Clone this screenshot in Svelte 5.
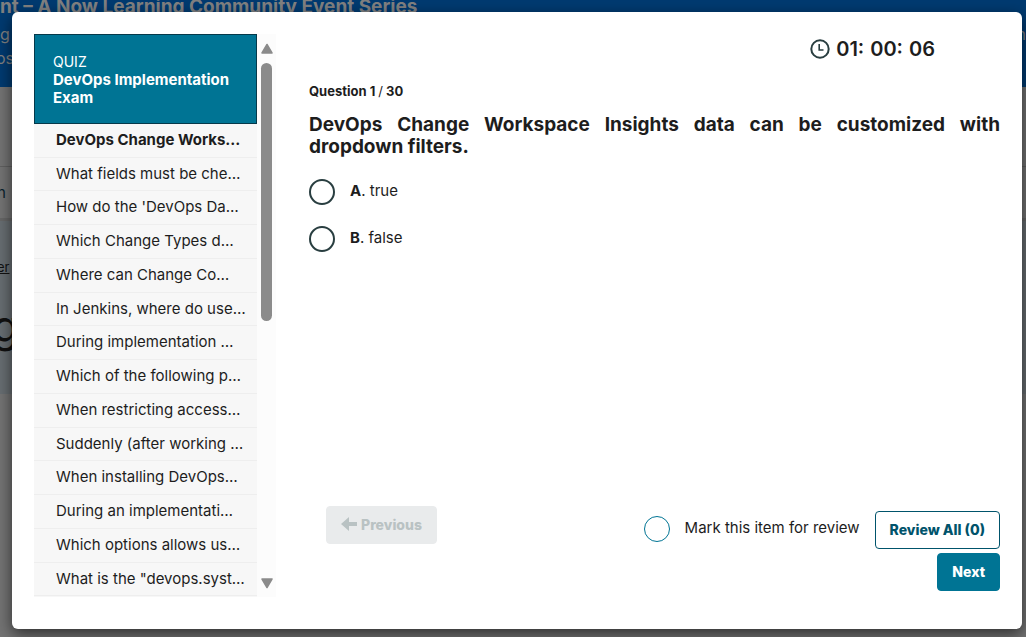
<script>
  const questions = [
    'DevOps Change Works…',
    'What fields must be che…',
    "How do the 'DevOps Da…",
    'Which Change Types d…',
    'Where can Change Co…',
    'In Jenkins, where do use…',
    'During implementation …',
    'Which of the following p…',
    'When restricting access…',
    'Suddenly (after working …',
    'When installing DevOps…',
    'During an implementati…',
    'Which options allows us…',
    'What is the "devops.syst…'
  ];
  const options = [
    { key: 'A', text: 'true' },
    { key: 'B', text: 'false' }
  ];
  let answer = $state('');
  let marked = $state(false);
  let current = $state(0);
</script>

<div class="page">
  <div class="backdrop" aria-hidden="true">
    <div class="banner">
      <div class="event">nt – A Now Learning Community Event Series</div>
      <div class="line"><span>g</span><span>n</span></div>
      <div class="line os">os</div>
    </div>
    <div class="strip"></div>
    <div class="tab">n</div>
    <div class="panel">
      <span class="crumb">er</span>
      <span class="big">g</span>
    </div>
  </div>

  <div class="modal" role="dialog" aria-label="Quiz">
    <aside>
      <div class="outline">
        <header>
          <span>QUIZ</span>
          <h1>DevOps Implementation Exam</h1>
        </header>
        <ul>
          {#each questions as q, i}
            <li><button class:active={i === current} onclick={() => (current = i)}>{q}</button></li>
          {/each}
        </ul>
      </div>
      <div class="scroll" aria-hidden="true">
        <svg width="14" height="12" viewBox="0 0 14 12"><path d="M7 1.5 12 10H2Z" fill="#8b8b8b" stroke="#8b8b8b" stroke-width="1.5" stroke-linejoin="round" /></svg>
        <div class="track"><div class="thumb"></div></div>
        <svg width="14" height="12" viewBox="0 0 14 12"><path d="M7 10.5 12 2H2Z" fill="#8b8b8b" stroke="#8b8b8b" stroke-width="1.5" stroke-linejoin="round" /></svg>
      </div>
    </aside>

    <main>
      <div class="timer">
        <svg width="20" height="20" viewBox="0 0 20 20" fill="none" stroke="#293e40"><circle cx="10" cy="10" r="8.7" stroke-width="2" /><path d="M9.2 5v6h4.3" stroke-width="1.6" /></svg>
        <span>01:</span><span>00:</span><span>06</span>
      </div>
      <p class="count">Question 1 <i>/</i> 30</p>
      <h2>DevOps Change Workspace Insights data can be customized with dropdown filters.</h2>
      <div class="options">
        {#each options as o}
          <label><input type="radio" name="answer" value={o.key} bind:group={answer} /><span><b>{o.key}</b>. {o.text}</span></label>
        {/each}
      </div>
      <footer>
        <button class="btn previous" disabled>
          <svg width="16" height="14" viewBox="0 0 16 14"><path d="M0 7 8 0v5h8v4H8v5Z" fill="currentColor" /></svg>
          Previous
        </button>
        <div class="actions">
          <label><input type="checkbox" bind:checked={marked} /><span>Mark this item for review</span></label>
          <button class="btn review">Review All ({marked ? 1 : 0})</button>
          <button class="btn next">Next</button>
        </div>
      </footer>
    </main>
  </div>
</div>

<style>
  :global(body) { margin: 0; background: #666; }
  * { box-sizing: border-box; }
  .page { display: grid; min-height: 100vh; font-family: Inter, "Liberation Sans", sans-serif; color: #1d1d1d; font-size: 15px; overflow: hidden; }
  .backdrop { grid-area: 1 / 1; background: #737373; color: #808080; }
  .banner { height: 87px; background: #003a70; }
  .event { height: 24px; font-size: 19px; line-height: 14px; font-weight: 700; white-space: nowrap; }
  .line { display: flex; justify-content: space-between; height: 24px; font-size: 16px; line-height: 20px; }
  .os { margin-left: -4px; }
  .strip { height: 80px; border-bottom: 1px solid #606060; }
  .tab { height: 54px; padding-top: 16px; color: #08222c; border-bottom: 3px solid #666; margin-left: -3px; }
  .panel { height: 173px; padding-top: 38px; background: #676d71; color: #111; display: flex; flex-direction: column; gap: 26px; }
  .crumb { margin-left: -3px; font-size: 13px; text-decoration: underline; }
  .big { font-size: 44px; line-height: 50px; margin-left: -8px; font-weight: 400; }
  .modal { grid-area: 1 / 1; z-index: 1; margin: 12px 4px 8px 12px; padding: 22px 22px 32px; background: #fff; border-radius: 6px; box-shadow: 0 5px 15px rgba(0, 0, 0, 0.6); display: flex; gap: 33px; }
  aside { display: flex; flex: none; }
  .outline { width: 223px; background: #f7f7f7; }
  header { height: 90px; padding: 18px; background: #007494; border: 1px solid #06394a; color: #fff; line-height: 18px; font-size: 14px; }
  h1 { margin: 0; font-size: 15px; line-height: 18px; font-weight: 700; }
  ul { list-style: none; margin: 0; padding: 0; }
  li { border-bottom: 1px solid #eee; }
  li button { display: block; width: 100%; height: 33px; padding: 0 12px 2px 22px; border: 0; background: none; color: inherit; font: inherit; text-align: left; white-space: nowrap; cursor: pointer; }
  li:nth-child(4n + 2) button { height: 32px; }
  li button.active { font-weight: 700; }
  .scroll { width: 19px; padding: 9px 0 8px; background: #fcfcfc; display: flex; flex-direction: column; align-items: center; gap: 8px; }
  .track { flex: 1; }
  .thumb { width: 11px; height: 51%; border-radius: 6px; background: #8b8b8b; }
  main { flex: 1; display: flex; flex-direction: column; min-width: 0; }
  .timer { display: flex; align-items: center; gap: 6px; align-self: flex-end; margin-right: 65px; height: 30px; font-size: 20px; font-weight: 600; }
  .count { margin: 18px 0 0; font-size: 13px; line-height: 18px; font-weight: 700; }
  .count i { font-weight: 400; font-style: normal; }
  h2 { margin: 14px 0 0; font-size: 19px; line-height: 22px; font-weight: 700; text-align: justify; }
  .options { display: flex; flex-direction: column; gap: 21px; margin-top: 21px; }
  label { display: flex; align-items: center; gap: 15px; cursor: pointer; }
  label span { padding-bottom: 3px; line-height: 20px; }
  input { appearance: none; width: 26px; height: 26px; margin: 0; border: 2px solid #293e40; border-radius: 50%; background: #fff; flex: none; }
  .actions input { border: 1px solid #007494; }
  input:checked { background: #007494; box-shadow: inset 0 0 0 4px #fff; }
  footer { margin-top: auto; display: flex; align-items: flex-start; justify-content: space-between; padding: 0 0 6px 17px; }
  .btn { height: 38px; padding: 0 14px 2px; border: 1px solid #007494; border-radius: 4px; font: inherit; font-size: 14px; font-weight: 800; white-space: nowrap; }
  .previous { display: flex; align-items: center; gap: 4px; background: #e9ebec; border-color: #e9ebec; color: #b9c2c3; }
  .actions { display: grid; grid-template-columns: auto auto; gap: 4px 15px; justify-items: end; padding-top: 5px; }
  .actions label { align-self: start; padding-top: 5px; }
  .review { background: #fff; border-color: #00536b; color: #00536b; }
  .next { grid-column: 2; background: #007494; color: #fff; }
</style>
